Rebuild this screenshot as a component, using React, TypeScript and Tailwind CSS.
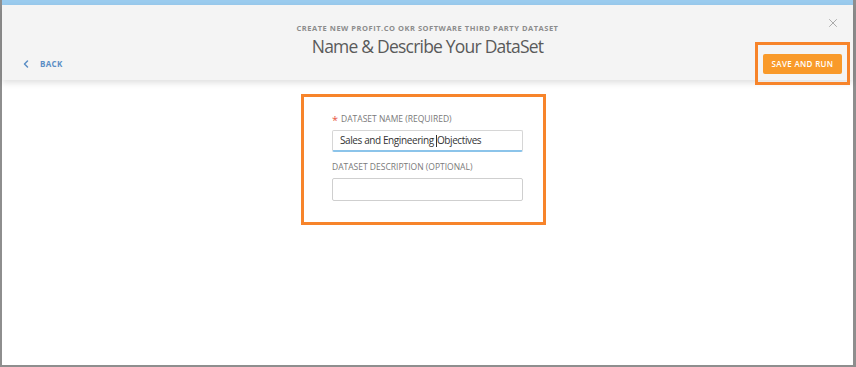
import { ChevronLeft, X } from 'lucide-react';

const font = { fontFamily: '"Open Sans", "Noto Sans", sans-serif' };

function Header() {
  return (
    <div className="relative z-10 h-[75px] shrink-0 bg-[#f4f4f4] shadow-[0_3px_6px_rgba(0,0,0,0.12)]">
      <div className="flex flex-col items-center pt-[18px]">
        <div className="text-[7.5px] font-bold uppercase tracking-[0.07em] text-[#8c8c8c]">
          Create new Profit.co OKR Software Third Party Dataset
        </div>
        <h1 className="mt-[1px] text-[17.5px] leading-[22px] tracking-[-0.045em] text-[#5a5a5a]">
          Name &amp; Describe Your DataSet
        </h1>
      </div>
      <button className="absolute right-[13px] top-[11px] text-[#a0a0a0]">
        <X size={14} strokeWidth={1.5} />
      </button>
      <div className="absolute left-[18px] top-[53px] flex items-center gap-[8px] text-[#5b8ec5]">
        <ChevronLeft size={12} strokeWidth={3} />
        <span className="text-[8px] font-bold tracking-[0.04em]">BACK</span>
      </div>
      <div className="absolute right-[3px] top-[37px] border-[3px] border-[#f7842a] px-[5px] pb-[8px] pt-[9px]">
        <button className="flex h-[20px] w-[79px] items-center justify-center rounded-[2px] bg-[#f99a2a] text-[8px] font-semibold tracking-[0.04em] text-white">
          SAVE AND RUN
        </button>
      </div>
    </div>
  );
}

function Field({
  label,
  required,
  children,
  active,
}: {
  label: string;
  required?: boolean;
  children?: React.ReactNode;
  active?: boolean;
}) {
  return (
    <div>
      <div className="flex h-[10px] items-center gap-[3px] text-[8.5px] uppercase text-[#7a7a7a]">
        {required && <span className="text-[11px] leading-none text-[#e8553f]">*</span>}
        {label}
      </div>
      <div
        className={
          active
            ? 'mt-[6px] flex h-[22px] w-[191px] items-center rounded-[2px] border border-[#d6d6d6] border-b-2 border-b-[#8cc4ea] bg-white px-[7px] text-[10px] tracking-[-0.4px] text-[#333]'
            : 'mt-[6px] flex h-[23px] w-[191px] items-center rounded-[2px] border border-[#cfcfcf] bg-white px-[7px] text-[10px] text-[#333]'
        }
      >
        {children}
      </div>
    </div>
  );
}

export default function App() {
  return (
    <div className="flex h-[367px] w-[856px] bg-[#8e8e8e] pb-[2px] pl-[2px] pr-[3px]" style={font}>
      <div className="flex flex-1 flex-col bg-white">
        <div className="h-[5px] shrink-0 bg-[#9acbee]" />
        <Header />
        <div className="flex justify-center pr-[8px] pt-[14px]">
          <div className="flex w-[245px] flex-col gap-[10px] border-[3px] border-[#f7842a] pb-[21px] pl-[28px] pt-[17px]">
            <Field label="Dataset Name (Required)" required active>
              <span className="whitespace-pre">Sales and Engineering </span>
              <span className="h-[12px] w-px bg-[#333]" />
              <span>Objectives</span>
            </Field>
            <Field label="Dataset Description (Optional)" />
          </div>
        </div>
      </div>
    </div>
  );
}
